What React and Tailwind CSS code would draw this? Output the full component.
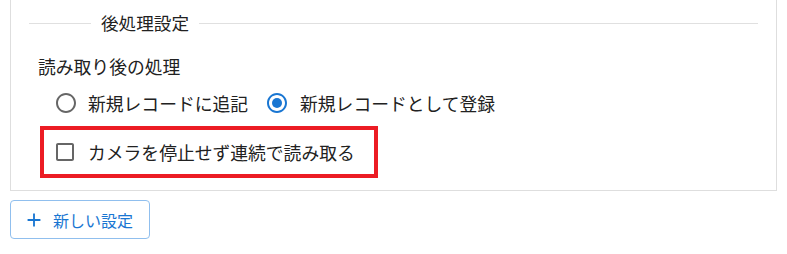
import React from "react";

const FONT = { fontFamily: '"Noto Sans CJK JP", "Noto Sans", Roboto, sans-serif' };

function RadioIcon({ checked }) {
  return (
    <svg width="24" height="24" viewBox="0 0 24 24" className="shrink-0" fill={checked ? "#1976d2" : "#666666"}>
      <path d="M12 2C6.48 2 2 6.48 2 12s4.48 10 10 10 10-4.48 10-10S17.52 2 12 2zm0 18c-4.42 0-8-3.58-8-8s3.58-8 8-8 8 3.58 8 8-3.58 8-8 8z" />
      {checked && <circle cx="12" cy="12" r="5" />}
    </svg>
  );
}

export default function App() {
  return (
    <div className="w-[787px] h-[254px] bg-white overflow-hidden" style={FONT}>
      <div className="ml-[10px] w-[767px] border border-t-0 border-[#dedede] px-[18px] pb-[12px]">
        <div className="flex items-center h-[46px]">
          <div className="w-[62px] h-px bg-[#e0e0e0]" />
          <span className="px-[10px] text-[17.6px] leading-[24px] text-[#212121]">後処理設定</span>
          <div className="flex-1 h-px bg-[#e0e0e0]" />
        </div>
        <div className="pl-[9px]">
          <div className="mt-[8px] h-[24px] text-[17.8px] leading-[24px] text-[#212121]">読み取り後の処理</div>
          <div className="mt-[4px] h-[42px] flex items-center text-[17.8px] text-[#212121]">
            <div className="ml-[16px] flex items-center">
              <RadioIcon checked={false} />
              <span className="ml-[10px] leading-[24px]">新規レコードに追記</span>
            </div>
            <div className="ml-[17px] flex items-center">
              <RadioIcon checked={true} />
              <span className="ml-[11px] leading-[24px]">新規レコードとして登録</span>
            </div>
          </div>
          <div className="mt-[2px] ml-[2px] w-[338px] h-[52px] border-[4px] border-[#ec1c24] flex items-center">
            <svg width="24" height="24" viewBox="0 0 24 24" className="ml-[9px] shrink-0" fill="#666666">
              <path d="M19 5v14H5V5h14m0-2H5c-1.1 0-2 .9-2 2v14c0 1.1.9 2 2 2h14c1.1 0 2-.9 2-2V5c0-1.1-.9-2-2-2z" />
            </svg>
            <span className="ml-[11px] text-[17.8px] leading-[24px] text-[#212121]">カメラを停止せず連続で読み取る</span>
          </div>
        </div>
      </div>
      <button className="mt-[9px] ml-[10px] w-[140px] h-[39px] border border-[#90bfee] rounded-[4px] flex items-center text-[#1976d2] bg-white">
        <svg width="22" height="22" viewBox="0 0 24 24" className="ml-[12px] shrink-0" fill="#1976d2">
          <path d="M19 13h-6v6h-2v-6H5v-2h6V5h2v6h6v2z" />
        </svg>
        <span className="ml-[8px] text-[16px] leading-[24px]">新しい設定</span>
      </button>
    </div>
  );
}
